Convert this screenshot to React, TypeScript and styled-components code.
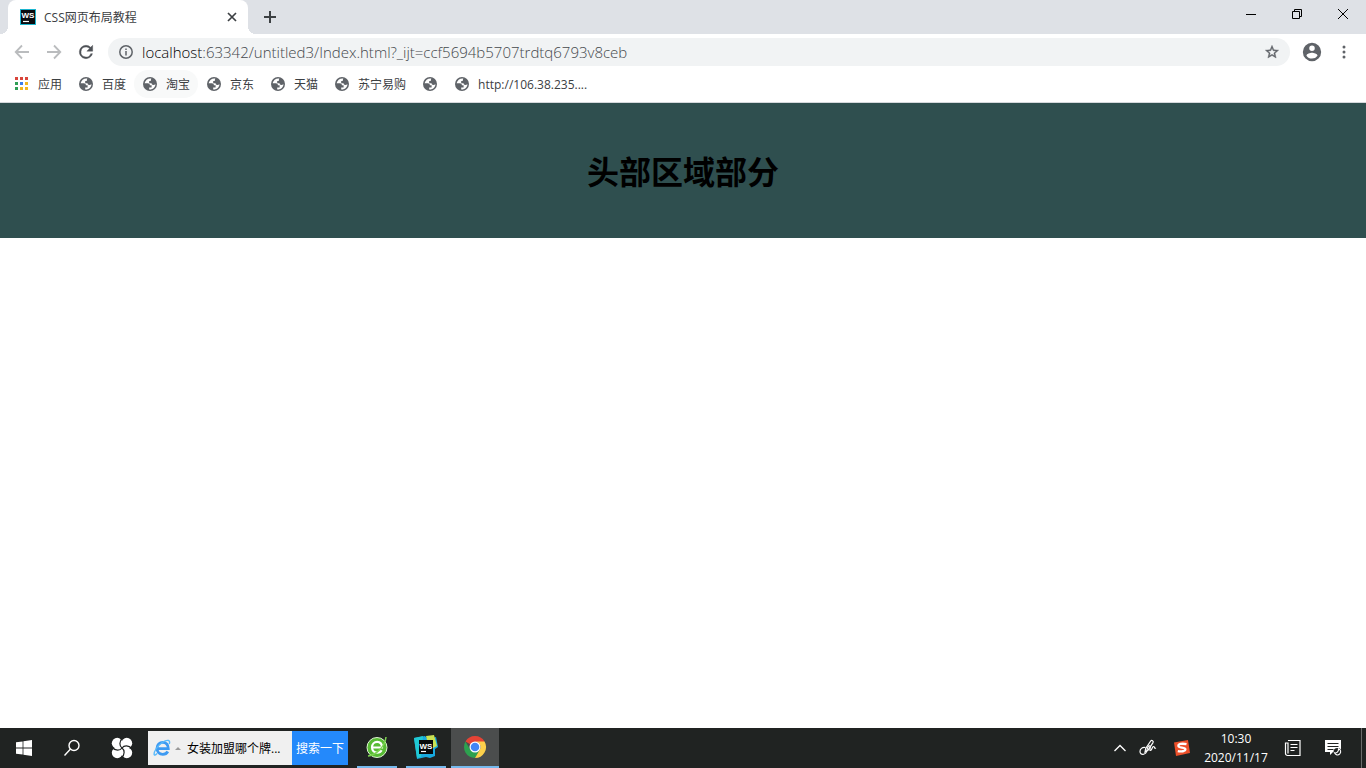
import React from 'react';
import styled, { createGlobalStyle, css } from 'styled-components';

const Global = createGlobalStyle`
  *, *::before, *::after { box-sizing: border-box; }
  body { margin: 0; background: #fff; font-family: "Open Sans", "Noto Sans CJK SC", sans-serif; }
  button, input { font: inherit; color: inherit; border: 0; margin: 0; padding: 0; background: none; }
  a { color: inherit; text-decoration: none; }
  svg { display: block; flex: none; }
`;

const Screen = styled.div`
  min-height: 100vh;
  display: flex;
  flex-direction: column;
`;

const TabStrip = styled.header`
  height: 34px;
  display: flex;
  background: #dee1e6;
  padding-left: 8px;
`;

const Tab = styled.div`
  position: relative;
  width: 240px;
  display: flex;
  align-items: center;
  gap: 8px;
  padding: 0 10px 0 12px;
  background: #fff;
  border-radius: 8px 8px 0 0;
  font-size: 12px;
  color: #3c4043;
  &::before, &::after {
    content: "";
    position: absolute;
    bottom: 0;
    width: 8px;
    height: 8px;
  }
  &::before { right: 100%; background: radial-gradient(circle at 0 0, transparent 8px, #fff 8px); }
  &::after { left: 100%; background: radial-gradient(circle at 100% 0, transparent 8px, #fff 8px); }
`;

const Label = styled.span`
  padding-top: 2px;
  line-height: 16px;
  white-space: nowrap;
`;

const TabTitle = styled(Label)`
  flex: 1;
`;

const IconButton = styled.button<{ $size: number }>`
  width: ${p => p.$size}px;
  height: ${p => p.$size}px;
  display: flex;
  align-items: center;
  justify-content: center;
  flex: none;
`;

const NewTab = styled(IconButton)`
  margin: 3px 0 0 8px;
`;

const WindowControls = styled.div`
  margin-left: auto;
  display: flex;
`;

const WindowButton = styled.button`
  width: 46px;
  height: 28px;
  display: flex;
  align-items: center;
  justify-content: center;
`;

const Toolbar = styled.nav`
  height: 36px;
  display: flex;
  align-items: center;
  padding: 0 8px;
  background: #fff;
`;

const NavButtons = styled.div`
  display: flex;
  gap: 4px;
  margin-right: 8px;
`;

const Omnibox = styled.div`
  flex: 1;
  min-width: 0;
  height: 28px;
  display: flex;
  align-items: center;
  gap: 8px;
  padding: 0 10px;
  border-radius: 14px;
  background: #f1f3f4;
`;

const Address = styled.a`
  flex: 1;
  font-size: 15px;
  font-weight: 300;
  line-height: 20px;
  color: #44484c;
  white-space: nowrap;
`;

const Host = styled.span`
  color: #000;
`;

const ToolbarEnd = styled.div`
  display: flex;
  gap: 4px;
  margin-left: 8px;
`;

const Bookmarks = styled.nav`
  height: 33px;
  display: flex;
  align-items: flex-start;
  padding: 0 6px;
  background: #fff;
  border-bottom: 1px solid #d5d8dc;
`;

const Bookmark = styled.a<{ $hover?: boolean }>`
  height: 28px;
  display: flex;
  align-items: center;
  gap: 8px;
  padding: 0 8px;
  border-radius: 14px;
  font-size: 12px;
  color: #3c4043;
  ${p => p.$hover && css`background: #f8f9f9;`}
`;

const PageHeader = styled.div`
  height: 135px;
  padding-top: 43px;
  background: #2f4f4f;
  text-align: center;
`;

const PageTitle = styled.h1`
  margin: 0;
  font-size: 32px;
  line-height: 48px;
  font-weight: 700;
  color: #000;
  font-family: "Noto Sans CJK SC", sans-serif;
`;

const PageBody = styled.main`
  flex: 1;
`;

const Taskbar = styled.footer`
  height: 40px;
  display: flex;
  background: #202322;
  color: #fff;
`;

const TaskButton = styled.button<{ $width: number; $active?: boolean }>`
  width: ${p => p.$width}px;
  height: 40px;
  display: flex;
  align-items: center;
  justify-content: center;
  background: ${p => (p.$active ? '#4b4d4d' : 'transparent')};
`;

const AppButton = styled(TaskButton)`
  border-bottom: 2px solid #76b9ed;
`;

const Apps = styled.div`
  display: flex;
  margin-left: 9px;
`;

const AppGap = styled.span<{ $width: number }>`
  width: ${p => p.$width}px;
`;

const SearchForm = styled.form`
  width: 200px;
  height: 34px;
  margin-top: 3px;
  display: flex;
  align-items: center;
  background: #f0f0f0;
  color: #000;
  font-size: 12px;
`;

const SearchIcon = styled.span`
  display: flex;
  align-items: center;
  gap: 3px;
  padding: 0 5px;
`;

const SearchInput = styled.input`
  flex: 1;
  min-width: 0;
  height: 20px;
`;

const SearchButton = styled.button`
  width: 56px;
  height: 34px;
  background: #2489fb;
  color: #fff;
`;

const Tray = styled.div`
  margin-left: auto;
  display: flex;
  align-items: center;
`;

const Clock = styled.time`
  width: 72px;
  font-size: 12px;
  line-height: 19px;
  text-align: center;
`;

const ShowDesktop = styled.button`
  width: 5px;
  height: 40px;
  border-left: 1px solid #6a6c6b;
`;

const LogoText = styled.text`
  font-family: "Liberation Sans", sans-serif;
  font-weight: 700;
  fill: #fff;
`;

const Globe = () => (
  <svg width="16" height="16" viewBox="0 0 16 16">
    <circle cx="8" cy="8" r="7" fill="#5f6368" />
    <path d="M9.300 2.500C6 2.100 3.200 4.200 2.600 7.300h3.200c1.500 0 2.100.8 2.100 1.900h1.700v2.200H7.200v2.100c3.300.4 6.100-1.900 6.300-5.200-.7.600-1.400.700-2.100.700-1.300 0-1.800-.6-1.800-1.700H7.200V5.100h1.600c0-1.100.1-1.600.5-2.600z" fill="#fff" />
  </svg>
);

const AppsGrid = () => (
  <svg width="16" height="16" viewBox="0 0 16 16">
    {[['#d9453b', '#d9453b', '#d9453b'], ['#2f9e55', '#3b7ded', '#f2b51f'], ['#2f9e55', '#f2b51f', '#f2b51f']].map((row, y) =>
      row.map((c, x) => <rect key={`${x}${y}`} x={1 + x * 5} y={1 + y * 5} width="3" height="3" fill={c} />))}
  </svg>
);

const WebStormSmall = () => (
  <svg width="16" height="16" viewBox="0 0 16 16">
    <rect width="16" height="16" fill="#1cb5cf" />
    <rect x="1" y="1" width="14" height="14" fill="#0b0d10" />
    <LogoText x="1.500" y="8.500" fontSize="8">WS</LogoText>
    <path d="M3 12.500h6" stroke="#fff" strokeWidth="1.200" />
  </svg>
);

const Arrow = ({ flip }: { flip?: boolean }) => (
  <svg width="16" height="16" viewBox="0 0 16 16" fill="none" stroke="#babcbe" strokeWidth="1.800">
    <path d={flip ? 'M1 8h13M8 1.500L14.300 8 8 14.500' : 'M15 8H2M8 1.500L1.700 8 8 14.500'} />
  </svg>
);

const Reload = () => (
  <svg width="20" height="20" viewBox="0 0 24 24" fill="#4d5156">
    <path d="M17.650 6.350A7.960 7.960 0 0 0 12 4a8 8 0 1 0 7.730 10h-2.080A6 6 0 1 1 12 6c1.660 0 3.140.69 4.220 1.780L13 11h7V4z" stroke="#4d5156" strokeWidth=".5" />
  </svg>
);

const Info = () => (
  <svg width="16" height="16" viewBox="0 0 16 16">
    <circle cx="8" cy="8" r="6.200" fill="none" stroke="#5f6368" strokeWidth="1.500" />
    <path d="M8 7v4.500M8 4.500V6" stroke="#5f6368" strokeWidth="1.500" />
  </svg>
);

const Star = () => (
  <svg width="16" height="16" viewBox="0 0 24 24" fill="#5f6368">
    <path d="M22 9.240l-7.190-.62L12 2 9.190 8.630 2 9.240l5.460 4.730L5.820 21 12 17.270 18.180 21l-1.630-7.030zM12 15.400l-3.760 2.270 1-4.280-3.320-2.880 4.380-.38L12 6.100l1.710 4.040 4.380.38-3.320 2.880 1 4.280z" stroke="#5f6368" strokeWidth=".6" />
  </svg>
);

const Profile = () => (
  <svg width="22" height="22" viewBox="0 0 24 24" fill="#5f6368">
    <path d="M12 2a10 10 0 1 0 0 20 10 10 0 0 0 0-20zm0 3a3 3 0 1 1 0 6 3 3 0 0 1 0-6zm0 14.200a7.200 7.200 0 0 1-6-3.220c.03-1.990 4-3.080 6-3.080 1.990 0 5.970 1.090 6 3.080a7.200 7.200 0 0 1-6 3.220z" />
  </svg>
);

const Dots = () => (
  <svg width="16" height="16" viewBox="0 0 16 16" fill="#5f6368">
    <circle cx="8" cy="3" r="1.500" /><circle cx="8" cy="8" r="1.500" /><circle cx="8" cy="13" r="1.500" />
  </svg>
);

const Windows = () => (
  <svg width="16" height="16" viewBox="0 0 16 16" fill="#fff">
    <path d="M0 2.300l6.600-.9v6.200H0zM7.400 1.300L16 0v7.600H7.400zM0 8.400h6.600v6.200L0 13.700zM7.400 8.400H16V16l-8.600-1.200z" />
  </svg>
);

const Search = () => (
  <svg width="18" height="18" viewBox="0 0 18 18" fill="none" stroke="#fff" strokeWidth="1.400">
    <circle cx="11" cy="6.500" r="5" /><path d="M7.500 10L1.500 16.500" />
  </svg>
);

const Pinwheel = () => (
  <svg width="22" height="22" viewBox="0 0 22 22">
    {[0, 90, 180, 270].map(a => (
      <circle key={a} cx="6.200" cy="6.200" r="5.400" fill="#fff" transform={`rotate(${a} 11 11)`} />
    ))}
    <circle cx="11" cy="11" r="4" fill="#fff" />
    {[0, 90, 180, 270].map(a => (
      <path key={a} d="M11 11C8.200 9 8 4.500 11.500 1" fill="none" stroke="#202322" strokeWidth="1.200" transform={`rotate(${a} 11 11)`} />
    ))}
  </svg>
);

const Explorer = () => (
  <svg width="18" height="18" viewBox="0 0 18 18" fill="none">
    <path d="M4.500 9.700h10.800C15.300 5.600 13 3.300 9.800 3.300S4 5.700 4 9.300c0 3.600 2.500 6 5.800 6 2.300 0 4-.9 5-2.800" stroke="#3d9af2" strokeWidth="2.800" />
    <path d="M4 14.500C.5 18.500.2 14.500 3 10 6 5 12.500.5 15.500 1.500c1.400.500 1.300 2 .7 3.500" stroke="#58b9fa" strokeWidth="1.400" />
  </svg>
);

const GreenBrowser = () => (
  <svg width="24" height="24" viewBox="0 0 24 24" fill="none">
    <circle cx="12" cy="12.500" r="10" fill="#58bb34" stroke="#dff5d3" strokeWidth="1" />
    <path d="M7 12.500h10c0-3.600-2-5.600-4.800-5.600-3 0-5.200 2.200-5.200 5.400s2.200 5.300 5.200 5.300c2 0 3.600-.8 4.400-2.300" stroke="#fff" strokeWidth="2.200" />
    <path d="M3 21C11 20 20 12 21 2" stroke="#7bd450" strokeWidth="1.500" />
  </svg>
);

const WebStorm = () => (
  <svg width="24" height="24" viewBox="0 0 24 24">
    <path d="M0 3l11-2 3 3 8-2 2 10-3 2v7l-5 2-4-1-9 2z" fill="#18a9df" />
    <path d="M12 1l8-1 3 11-4 2V5h-6z" fill="#c9e152" />
    <path d="M0 3l9-2-2 21-4 1z" fill="#20c9d4" />
    <rect x="5" y="5" width="14" height="14" fill="#08090b" />
    <LogoText x="5.500" y="13.500" fontSize="8">WS</LogoText>
    <path d="M7 16.500h5" stroke="#fff" strokeWidth="1.200" />
  </svg>
);

const Chrome = () => (
  <svg width="24" height="24" viewBox="0 0 24 24">
    <path d="M12 12L2.470 6.500A11 11 0 0 1 21.530 6.500z" fill="#e54335" />
    <path d="M2.470 6.500l4.770 8.250L12 17.500l-.1 5.500A11 11 0 0 1 2.470 6.500z" fill="#2da14f" />
    <path d="M12 23l4.760-8.250H7.240L12 17.500z" fill="#2da14f" />
    <path d="M12 23l4.760-8.250A5.500 5.500 0 0 0 12 6.500h9.530A11 11 0 0 1 12 23z" fill="#fdd04b" />
    <circle cx="12" cy="12" r="5.500" fill="#fff" /><circle cx="12" cy="12" r="4.300" fill="#4385f3" />
  </svg>
);

const Chevron = () => (
  <svg width="14" height="14" viewBox="0 0 14 14" fill="none" stroke="#fff" strokeWidth="1.300"><path d="M1.500 10L7 4.500l5.500 5.500" /></svg>
);

const Pen = () => (
  <svg width="18" height="18" viewBox="0 0 18 18" fill="none" stroke="#fff" strokeWidth="1.200">
    <path d="M6 13l.7-3.500 5-7.500c1-1.300 3.200.1 2.300 1.600L9 11.200z" />
    <path d="M6.500 8.500C3 8 1 10 1 12.500 1 16.500 7 16.500 8 11c.5-3 2-5 3-4s-1 4.500.5 4.500S13 7.500 14.500 7.500s.5 2.500 2.500 1.500" />
  </svg>
);

const Sogou = () => (
  <svg width="18" height="18" viewBox="0 0 18 18">
    <path d="M1 3.500L15 1l2 13-14 3z" fill="#ed502a" />
    <path d="M13.500 5.200C9 4.200 5.200 5 5.400 7c.2 2.300 7 .8 7 3.300 0 2-4.300 2.600-7.600 1.800" fill="none" stroke="#fff" strokeWidth="2.300" />
  </svg>
);

const News = () => (
  <svg width="18" height="18" viewBox="0 0 18 18" fill="none" stroke="#fff" strokeWidth="1.200">
    <path d="M4 1.500h12v15H3.500a2 2 0 0 1-2-2V4H4v10.500M6.500 5.500h7M6.500 8.500h7M6.500 11.500h4" />
  </svg>
);

const Notice = () => (
  <svg width="18" height="18" viewBox="0 0 18 18">
    <path d="M1 1h16v12H9l-3 3v-3H1z" fill="#fff" />
    <path d="M3.500 4.500h11M3.500 7.500h11M3.500 10.500h6" stroke="#202322" strokeWidth="1" />
    <circle cx="13.500" cy="13" r="4" fill="#202322" />
    <path d="M14.500 9.700a3.200 3.200 0 1 1-4 4.200c2 .5 4.300-1 4-4.200z" fill="none" stroke="#fff" strokeWidth="1.100" />
  </svg>
);

const bookmarks = ['百度', '淘宝', '京东', '天猫', '苏宁易购', '', 'http://106.38.235....'];

export default function App() {
  return (
    <Screen>
      <Global />
      <TabStrip>
        <Tab>
          <WebStormSmall />
          <TabTitle>CSS网页布局教程</TabTitle>
          <IconButton $size={12} aria-label="Close tab">
            <svg width="10" height="10" viewBox="0 0 10 10" stroke="#3c4043" strokeWidth="1.700"><path d="M1 1l8 8M9 1L1 9" /></svg>
          </IconButton>
        </Tab>
        <NewTab $size={28} aria-label="New tab">
          <svg width="12" height="12" viewBox="0 0 12 12" stroke="#3c4043" strokeWidth="2"><path d="M6 0v12M0 6h12" /></svg>
        </NewTab>
        <WindowControls>
          <WindowButton aria-label="Minimize"><svg width="10" height="10" viewBox="0 0 10 10" stroke="#000"><path d="M0 5.500h10" /></svg></WindowButton>
          <WindowButton aria-label="Restore"><svg width="10" height="10" viewBox="0 0 10 10" stroke="#000" fill="none"><path d="M.5 2.500h7v7h-7zM2.500 2.500v-2h7v7h-2" /></svg></WindowButton>
          <WindowButton aria-label="Close"><svg width="10" height="10" viewBox="0 0 10 10" stroke="#000"><path d="M0 0l10 10M10 0L0 10" /></svg></WindowButton>
        </WindowControls>
      </TabStrip>
      <Toolbar>
        <NavButtons>
          <IconButton $size={28} aria-label="Back"><Arrow /></IconButton>
          <IconButton $size={28} aria-label="Forward"><Arrow flip /></IconButton>
          <IconButton $size={28} aria-label="Reload"><Reload /></IconButton>
        </NavButtons>
        <Omnibox>
          <Info />
          <Address href="#"><Host>localhost</Host>:63342/untitled3/Index.html?_ijt=ccf5694b5707trdtq6793v8ceb</Address>
          <IconButton $size={16} aria-label="Bookmark this page"><Star /></IconButton>
        </Omnibox>
        <ToolbarEnd>
          <IconButton $size={28} aria-label="Profile"><Profile /></IconButton>
          <IconButton $size={28} aria-label="Menu"><Dots /></IconButton>
        </ToolbarEnd>
      </Toolbar>
      <Bookmarks>
        <Bookmark href="#"><AppsGrid /><Label>应用</Label></Bookmark>
        {bookmarks.map(name => (
          <Bookmark key={name} href="#" aria-label={name || 'Bookmark'} $hover={name === '淘宝'}>
            <Globe />{name && <Label>{name}</Label>}
          </Bookmark>
        ))}
      </Bookmarks>
      <PageHeader><PageTitle>头部区域部分</PageTitle></PageHeader>
      <PageBody />
      <Taskbar>
        <TaskButton $width={48} aria-label="Start"><Windows /></TaskButton>
        <TaskButton $width={48} aria-label="Search"><Search /></TaskButton>
        <TaskButton $width={52} aria-label="Pinwheel"><Pinwheel /></TaskButton>
        <SearchForm>
          <SearchIcon>
            <Explorer />
            <svg width="8" height="6" viewBox="0 0 8 6"><path d="M1 5l3-3 3 3z" fill="#999" /></svg>
          </SearchIcon>
          <SearchInput aria-label="Web search" defaultValue="女装加盟哪个牌..." />
          <SearchButton type="button">搜索一下</SearchButton>
        </SearchForm>
        <Apps>
          <AppButton $width={40} aria-label="Browser"><GreenBrowser /></AppButton>
          <AppGap $width={9} />
          <AppButton $width={40} aria-label="WebStorm"><WebStorm /></AppButton>
          <AppGap $width={5} />
          <AppButton $width={48} $active aria-label="Chrome"><Chrome /></AppButton>
        </Apps>
        <Tray>
          <TaskButton $width={24} aria-label="Hidden icons"><Chevron /></TaskButton>
          <TaskButton $width={32} aria-label="Pen"><Pen /></TaskButton>
          <TaskButton $width={36} aria-label="Input method"><Sogou /></TaskButton>
          <Clock>10:30<br />2020/11/17</Clock>
          <TaskButton $width={41} aria-label="News"><News /></TaskButton>
          <TaskButton $width={40} aria-label="Notifications"><Notice /></TaskButton>
          <AppGap $width={8} />
          <ShowDesktop aria-label="Show desktop" />
        </Tray>
      </Taskbar>
    </Screen>
  );
}
